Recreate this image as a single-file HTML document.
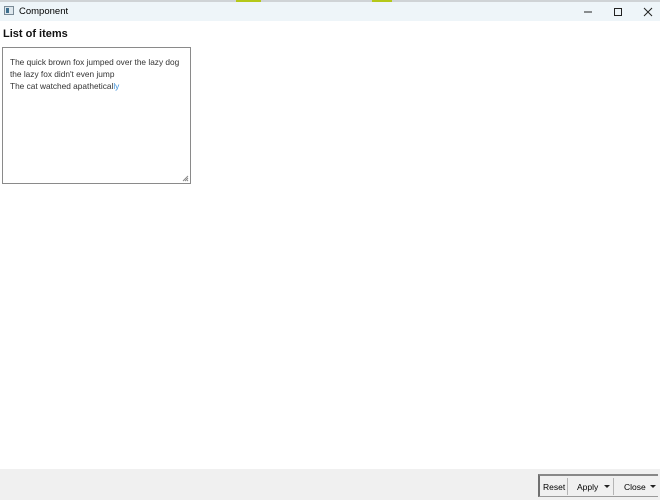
<!DOCTYPE html>
<html><head><meta charset="utf-8"><style>
*{margin:0;padding:0;box-sizing:border-box}
body{width:660px;height:500px;overflow:hidden;background:#fff;font-family:"Liberation Sans",sans-serif;position:relative}
.top{position:absolute;left:0;top:0;width:660px;height:2px;background:#cfd3d6}
.title{position:absolute;left:0;top:2px;width:660px;height:19px;background:#eef5f9}
.title .t{position:absolute;left:19px;top:4px;font-size:9.5px;color:#000}
.ico{position:absolute;left:4px;top:4px;width:10px;height:9px;border:1px solid #7a8a96;background:#dfe8ee}
.ico:before{content:"";position:absolute;left:1px;top:1px;width:3px;height:5px;background:#3e6f8e}
h1{position:absolute;left:3px;top:28px;font-size:11px;font-weight:bold;color:#111}
.ta{position:absolute;left:2px;top:47px;width:189px;height:137px;border:1px solid #8a8a8a;padding:8px 0 0 7px;font-size:8.3px;line-height:12px;color:#333}
.foot{position:absolute;left:0;top:469px;width:660px;height:31px;background:#f0f0f0}
.grp{position:absolute;left:538px;top:474px;width:120px;height:23px;border:1px solid #9a9a9a;border-right:none;border-left:2px solid #707070;border-top:2px solid #888;font-size:8.5px;color:#000}
.grp span{position:absolute;top:6px}
.sep{position:absolute;top:2px;width:1px;height:17px;background:#b5b5b5}
.arr{position:absolute;top:9px;width:0;height:0;border-left:3px solid transparent;border-right:3px solid transparent;border-top:3px solid #222}
</style></head><body>
<div class="top"></div>
<div style="position:absolute;left:236px;top:0;width:25px;height:2px;background:#b5c81a"></div>
<div style="position:absolute;left:372px;top:0;width:20px;height:2px;background:#b5c81a"></div>
<div class="title"><div class="ico"></div><div class="t">Component</div>
<svg style="position:absolute;left:580px;top:3px" width="80" height="14">
<line x1="4" y1="7" x2="12" y2="7" stroke="#222" stroke-width="1"/>
<rect x="34.5" y="3.5" width="7" height="7" fill="none" stroke="#222"/>
<path d="M64 3 L72 11 M72 3 L64 11" stroke="#222" stroke-width="1"/>
</svg></div>
<h1>List of items</h1>
<div class="ta">The quick brown fox jumped over the lazy dog<br>the lazy fox didn't even jump<br>The cat watched apathetical<span style="color:#3d8fd8">ly</span>
<svg style="position:absolute;right:1px;bottom:1px" width="7" height="7"><path d="M6 1 L1 6 M6 3 L3 6 M6 5 L5 6" stroke="#888"/></svg></div>
<div class="foot"></div>
<div class="grp">
<span style="left:3px">Reset</span><div class="sep" style="left:27px"></div>
<span style="left:37px">Apply</span><div class="arr" style="left:64px"></div><div class="sep" style="left:73px"></div>
<span style="left:84px">Close</span><div class="arr" style="left:110px"></div>
</div>
</body></html>
